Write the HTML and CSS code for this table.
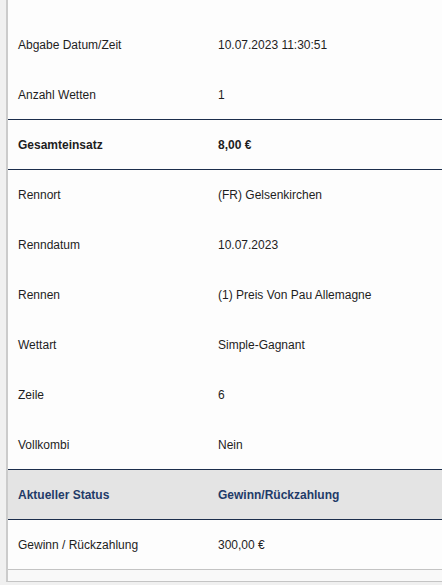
FILE: index.html
```html
<!DOCTYPE html>
<html lang="de">
<head>
<meta charset="utf-8">
<link rel="stylesheet" href="styles.css">
</head>
<body>
<div class="panel">
  <div class="details">
    <div class="row"><div class="label">Abgabe Datum/Zeit</div><div class="value">10.07.2023 11:30:51</div></div>
    <div class="row sep"><div class="label">Anzahl Wetten</div><div class="value">1</div></div>
    <div class="row sep strong"><div class="label">Gesamteinsatz</div><div class="value">8,00 €</div></div>
    <div class="row"><div class="label">Rennort</div><div class="value">(FR) Gelsenkirchen</div></div>
    <div class="row"><div class="label">Renndatum</div><div class="value">10.07.2023</div></div>
    <div class="row"><div class="label">Rennen</div><div class="value">(1) Preis Von Pau Allemagne</div></div>
    <div class="row"><div class="label">Wettart</div><div class="value">Simple-Gagnant</div></div>
    <div class="row"><div class="label">Zeile</div><div class="value">6</div></div>
    <div class="row sep"><div class="label">Vollkombi</div><div class="value">Nein</div></div>
    <div class="row sep status"><div class="label">Aktueller Status</div><div class="value">Gewinn/Rückzahlung</div></div>
    <div class="row last"><div class="label">Gewinn / Rückzahlung</div><div class="value">300,00 €</div></div>
  </div>
  <div class="footer"></div>
</div>
</body>
</html>
```
FILE: styles.css
```css
html, body {
  margin: 0;
  padding: 0;
  background: #f0f0f0;
  height: 585px;
  overflow: hidden;
}
.panel {
  margin-left: 6px;
  border-left: 2px solid #cbcbcb;
  background: #fdfdfd;
  height: 582px;
  border-bottom: 1px solid #c4c4c4;
  box-sizing: border-box;
  display: flex;
  flex-direction: column;
}
.details {
  padding-top: 20px;
  font-family: "Liberation Sans", Arial, sans-serif;
  font-size: 12px;
  color: #1e1e1e;
}
.row {
  display: flex;
  align-items: center;
  height: 49px;
  border-bottom: 1px solid transparent;
}
.row.sep {
  border-bottom-color: #1c2e4c;
}
.row.last {
  border-bottom-color: #c4c4c4;
}
.label {
  width: 200px;
  padding-left: 10px;
  box-sizing: border-box;
}
.value {
  padding-left: 10px;
}
.strong {
  font-weight: bold;
}
.status {
  background: #e4e4e4;
  font-weight: bold;
  color: #1f3b68;
}
.footer {
  flex: 1;
  background: #f9f9f9;
}
```
